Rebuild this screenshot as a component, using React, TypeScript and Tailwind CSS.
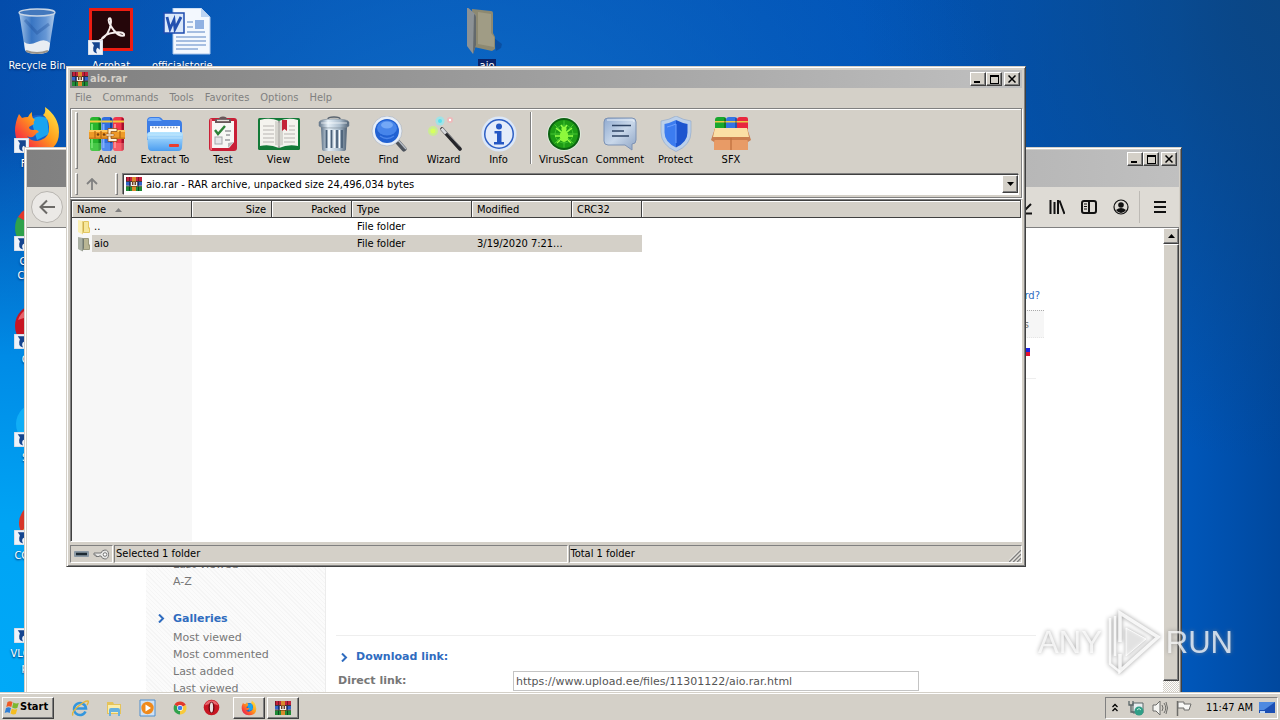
import React from "react";

const UI = "font-['DejaVu_Sans_Condensed','DejaVu_Sans',sans-serif]";

/* ---------- icons ---------- */

type IconProps = { className?: string };

function RarBooks({ className }: IconProps) {
  return (
    <svg className={className} viewBox="0 0 16 16" aria-hidden="true">
      <path d="M0 1h16v4H0z" fill="#c2213c" />
      <path d="M0 5.500h16v4H0z" fill="#3563c9" />
      <path d="M0 10.500h16v4.500H0z" fill="#1f8a35" />
      <path d="M0 5h16v.8H0zM0 9.800h16v.8H0z" fill="#23180f" />
      <path d="M0 1h1v4H0zM3 1h1v4H3zM12 1h1v4h-1z" fill="#7c1426" />
      <path d="M3 10.500h1V15H3zM12 10.500h1V15h-1z" fill="#0c4a1c" />
      <path d="M3 5.800h1v4H3zM12 5.800h1v4h-1z" fill="#16307a" />
      <path d="M6 1h4v14H6z" fill="#d98a2b" />
      <path d="M4.500 5.500h7v5h-7z" fill="#5b2d10" />
      <path d="M5.500 6v3.500h5V6M8 6v3" stroke="#f4efe6" strokeWidth="1.200" fill="none" />
    </svg>
  );
}

function AddIcon({ className }: IconProps) {
  const books = [
    { x: 1, c: "#28b52d", d: "#0d7d1b", l: "#6de06a" },
    { x: 12.5, c: "#2f6fe0", d: "#153fa0", l: "#7fb0ff" },
    { x: 24, c: "#f0354b", d: "#a80f2c", l: "#ff8b8e" },
  ];
  return (
    <svg className={className} viewBox="0 0 36 36" aria-hidden="true">
      {books.map((b) => (
        <g key={b.x}>
          <path d={`M${b.x} 4q0-3 3-3h5q3 0 3 3v28q0 3-3 3h-5q-3 0-3-3z`} fill={b.c} />
          <path d={`M${b.x + 8.500} 1.500q2.500 0 2.500 3v27q0 3-2.500 3z`} fill={b.d} />
          <path d={`M${b.x + 1} 8h2v24h-2z`} fill={b.l} />
          <path d={`M${b.x} 4.500h11v2h-11z`} fill="#f2ca3e" />
          <path d={`M${b.x} 27h11v5q0 3-3 3h-5q-3 0-3-3z`} fill={b.l} opacity=".45" />
        </g>
      ))}
      <path d="M0 14h36v9H0z" fill="#ee9a28" />
      <path d="M0 14h36v2H0z" fill="#ffc95e" />
      <path d="M0 21.500h36V23H0z" fill="#c97a1c" />
      <path d="M6 15v7M31 15v7M12 15v7" stroke="#b86a14" strokeWidth="1.300" />
      <circle cx="9" cy="18.500" r="1.300" fill="#7a400c" />
      <circle cx="15" cy="18.500" r="1.300" fill="#7a400c" />
      <path d="M19 12.500h9v3h-6v7h6v3h-9z" fill="#fff2d8" stroke="#8f4b10" strokeWidth=".8" />
      <path d="M17 18h8v2h-8z" fill="#fff2d8" stroke="#8f4b10" strokeWidth=".5" />
    </svg>
  );
}

function ExtractIcon({ className }: IconProps) {
  return (
    <svg className={className} viewBox="0 0 36 36" aria-hidden="true">
      <defs>
        <linearGradient id="fold" x1="0" y1="0" x2="0" y2="1">
          <stop offset="0" stopColor="#b9e6ff" />
          <stop offset="1" stopColor="#4b9df0" />
        </linearGradient>
      </defs>
      <path d="M0 5q0-4 4-4h8q2 0 4 3h15q4 0 4 4v16H0z" fill="#3c7de6" />
      <path d="M1 5q0-3 3-3h8l3 3H1z" fill="#79b2fb" />
      <path d="M3 10h30v12H3z" fill="#fff" />
      <path d="M5 11.500h26" stroke="#8c9bb3" strokeWidth="1.500" strokeDasharray="1.500 1.500" />
      <path d="M0 19q0-3 3-3h30q3 0 3 3l-1 12q0 4-4 4H5q-4 0-4-4z" fill="url(#fold)" />
      <path d="M1 19h34M1 22h34" stroke="#d8f2ff" strokeWidth=".8" opacity=".7" />
      <rect x="22" y="28" width="10" height="3" rx="1" fill="#ea3d2e" />
    </svg>
  );
}

function TestIcon({ className }: IconProps) {
  return (
    <svg className={className} viewBox="0 0 36 36" aria-hidden="true">
      <rect x="4" y="2" width="28" height="33" rx="3" fill="#c91f36" />
      <path d="M5 3h2v31H6q-1 0-1-2z" fill="#f16c7a" />
      <path d="M7 5h22v21l-5 6H7z" fill="#f7f7f5" />
      <path d="M29 26l-6 6v-5z" fill="#b9babd" />
      <path d="M10 7V3h4q0-2.500 4-2.500T22 3h4v4z" fill="#68575a" />
      <path d="M12 4.500h12" stroke="#e8e2df" strokeWidth="1.300" />
      <path d="M10 14l3 4 7-8" fill="none" stroke="#2d8238" strokeWidth="2.400" />
      <path d="M20 15h6M20 24h5M21 19h4" stroke="#9a9ca0" strokeWidth="1.300" />
      <rect x="10" y="21" width="7" height="7" fill="#e6e7e9" stroke="#a5a7ab" />
    </svg>
  );
}

function ViewIcon({ className }: IconProps) {
  return (
    <svg className={className} viewBox="0 0 42 36" aria-hidden="true">
      <rect x="0" y="2" width="42" height="32" rx="1.500" fill="#137a38" />
      <path d="M2 4q10-3 19 1 9-4 19-1v26q-10-2-19 2-9-4-19-2z" fill="#f4f3ee" />
      <path d="M21 5v27" stroke="#888" strokeWidth="1.500" />
      <path d="M17 5q3 0 4 2v24q-1-2-4-2zM25 5q-3 0-4 2v24q1-2 4-2z" fill="#c9c8c2" opacity=".7" />
      <path d="M5 10h11M5 14h11M5 18h11M5 22h11M5 26h11M26 18h11M26 22h11M26 26h11M31 14h6M31 10h6" stroke="#b7b6b1" strokeWidth="1.200" />
      <path d="M24 4h5v11l-2.500-2L24 15z" fill="#c32237" />
    </svg>
  );
}

function DeleteIcon({ className }: IconProps) {
  return (
    <svg className={className} viewBox="0 0 36 36" aria-hidden="true">
      <defs>
        <linearGradient id="can" x1="0" x2="1" y1="0" y2="0">
          <stop offset="0" stopColor="#5e7287" />
          <stop offset=".3" stopColor="#e6f0f8" />
          <stop offset=".7" stopColor="#aabccc" />
          <stop offset="1" stopColor="#4f6073" />
        </linearGradient>
      </defs>
      <path d="M12 3q0-2 6-2t6 2" fill="none" stroke="#59636e" strokeWidth="1.500" />
      <path d="M5 11h26l-1 22q0 2-3 2H9q-3 0-3-2z" fill="url(#can)" />
      <path d="M10.500 14v18M15.500 14v18M21 14v18M26 14v18" stroke="#4b6179" strokeWidth="1.800" />
      <path d="M13 14v18M18.300 14v18M23.500 14v18" stroke="#fff" strokeWidth="1" />
      <path d="M3 6q1-3 15-3t15 3v4q-1 2-15 2T3 10z" fill="url(#can)" stroke="#7a8894" strokeWidth=".6" />
      <path d="M5 7h26" stroke="#fff" strokeWidth="1" opacity=".7" />
    </svg>
  );
}

function FindIcon({ className }: IconProps) {
  return (
    <svg className={className} viewBox="0 0 36 36" aria-hidden="true">
      <path d="M25 24l8 9" stroke="#4d535c" strokeWidth="5" strokeLinecap="round" />
      <path d="M27 24l8 9" stroke="#b8bec6" strokeWidth="1.500" />
      <circle cx="16" cy="15" r="15" fill="#e7eef8" stroke="#a4adba" strokeWidth=".6" />
      <circle cx="16" cy="15" r="12" fill="#2161d2" />
      <ellipse cx="16" cy="12" rx="10" ry="7.500" fill="#4e8cee" opacity=".85" />
      <ellipse cx="16" cy="9" rx="6" ry="3.500" fill="#86b6fb" opacity=".7" />
      <path d="M9 20q7 5 14 0" stroke="#4c86ea" strokeWidth="1.500" fill="none" />
    </svg>
  );
}

function WizardIcon({ className }: IconProps) {
  return (
    <svg className={className} viewBox="0 0 36 36" aria-hidden="true">
      <path d="M16 13l18 20" stroke="#26262a" strokeWidth="3.600" strokeLinecap="round" />
      <path d="M15.500 12.500l4.500 5" stroke="#d9dadd" strokeWidth="3" />
      <path d="M18 13l16 17.500" stroke="#8d8f94" strokeWidth="1" />
      <circle cx="7" cy="15" r="5" fill="#c8f77c" opacity=".7" />
      <circle cx="7" cy="15" r="2.500" fill="#d7ff60" />
      <circle cx="14" cy="5" r="4.500" fill="#8de9f2" opacity=".7" />
      <circle cx="14" cy="5" r="2" fill="#59e0ee" />
      <circle cx="24" cy="4" r="3" fill="#f5b3b6" opacity=".8" />
      <circle cx="24" cy="4" r="1.200" fill="#fff" />
    </svg>
  );
}

function InfoIcon({ className }: IconProps) {
  return (
    <svg className={className} viewBox="0 0 36 36" aria-hidden="true">
      <circle cx="18" cy="18" r="17.500" fill="#dbe7f8" />
      <circle cx="18" cy="18" r="15" fill="#2c5ec3" />
      <circle cx="18" cy="18" r="13.500" fill="#e4ecfa" />
      <circle cx="18" cy="10.500" r="3" fill="#2457c4" />
      <path d="M13.500 15h7v11h2.500v2.500h-10V26h3v-8.500h-2.500z" fill="#2457c4" />
    </svg>
  );
}

function VirusIcon({ className }: IconProps) {
  return (
    <svg className={className} viewBox="0 0 36 36" aria-hidden="true">
      <circle cx="18" cy="18" r="17" fill="#dfe9dc" />
      <circle cx="18" cy="18" r="16" fill="#0c6312" />
      <circle cx="18" cy="18" r="14" fill="#1d9c15" />
      <path d="M18 4.500v27M4.500 18h27M8.500 8.500l19 19M27.500 8.500l-19 19" stroke="#51cf3a" strokeWidth=".8" />
      <circle cx="18" cy="18" r="9" fill="none" stroke="#47c932" strokeWidth=".8" />
      <path d="M10 12l5 4M26 12l-5 4M9 20h18M11 27l5-5M25 27l-5-5M15 9l2 3M21 9l-2 3" stroke="#95ff47" strokeWidth="1.400" />
      <ellipse cx="18" cy="20" rx="4.200" ry="6" fill="#8df83c" />
      <circle cx="18" cy="13" r="2.600" fill="#8df83c" />
    </svg>
  );
}

function CommentIcon({ className }: IconProps) {
  return (
    <svg className={className} viewBox="0 0 36 36" aria-hidden="true">
      <defs>
        <linearGradient id="cmt" x1="0" y1="0" x2="1" y2="1">
          <stop offset="0" stopColor="#8fa9cf" />
          <stop offset=".5" stopColor="#c9d8ea" />
          <stop offset="1" stopColor="#8da3c4" />
        </linearGradient>
      </defs>
      <path d="M6 2h24q4 0 4 4v18q0 4-4 4v6l-7-5H6q-4 0-4-4V6q0-4 4-4z" fill="url(#cmt)" stroke="#7d92b4" />
      <path d="M5 4h26q1 0 1 2" fill="none" stroke="#e9f1fa" />
      <path d="M10 9.500h19M10 15h12M10 20h17" stroke="#2f4464" strokeWidth="1.700" />
    </svg>
  );
}

function ProtectIcon({ className }: IconProps) {
  return (
    <svg className={className} viewBox="0 0 36 36" aria-hidden="true">
      <path d="M18 0q7 4 15 5v11q0 13-15 19.500Q3 29 3 16V5q8-1 15-5z" fill="#bcd0ea" stroke="#8ca5c8" strokeWidth=".6" />
      <path d="M18 4q6 3 11.500 4v8.500q0 9.500-11.500 15z" fill="#1d55cf" />
      <path d="M18 4Q12 7 6.500 8v8.500q0 9.500 11.500 15z" fill="#3c7cf0" />
      <path d="M18 8v19M9 11q4-1 9-3" stroke="#6ea0ff" strokeWidth="1" fill="none" />
    </svg>
  );
}

function SfxIcon({ className }: IconProps) {
  return (
    <svg className={className} viewBox="0 0 40 36" aria-hidden="true">
      <path d="M4 4q0-3 3-3h6q2 0 2 2v10H4z" fill="#18a72d" />
      <path d="M15 4q0-3 3-3h6q2 0 2 2v10H15z" fill="#3474e4" />
      <path d="M26 4q0-3 3-3h6q2 0 2 2v10H26z" fill="#e8273f" />
      <path d="M4 5h33v1.500H4z" fill="#eac847" />
      <path d="M13 2h2v10h-2zM24 2h2v10h-2z" fill="#000" opacity=".25" />
      <path d="M3 13h34v21H3z" fill="#e89b66" />
      <path d="M3 21h34v3H3z" fill="#b86b3c" opacity=".6" />
      <path d="M4 12L0 24l3 2 3-9zM36 12l4 12-3 2-3-9z" fill="#c98053" />
      <path d="M4 12h32l2 9H2z" fill="#fbe0a5" />
      <path d="M20 22v12" stroke="#c0703f" strokeWidth="1.300" />
    </svg>
  );
}

function FolderSmall({ className, dim }: IconProps & { dim?: boolean }) {
  return (
    <svg className={className} viewBox="0 0 16 16" aria-hidden="true">
      <path d="M5 2h7q1 0 1 1v5l1 1v4q0 1-1 1H5z" fill={dim ? "#9b9a7c" : "#e3c75f"} />
      <path d="M8 3h4v6l1 1v3H8z" fill={dim ? "#b9b694" : "#f6e79b"} />
      <path d="M2 1l5 1q1 0 1 1v9l-1.500 3.500L2 13z" fill={dim ? "#aab0a4" : "#fbf0b4"} />
      <path d="M6.500 2L8 3v9l-1.500 3.500z" fill={dim ? "#737a70" : "#d0b04a"} />
    </svg>
  );
}

function FolderIcon({ className }: IconProps) {
  return (
    <svg className={className} viewBox="0 0 48 48" aria-hidden="true">
      <path d="M31 30l8 6-1 4-5 3z" fill="#0a3c84" opacity=".5" />
      <path d="M9 1l19 2q2 0 2 2v20l2 4v12l-3 2-18-4z" fill="#8d8971" />
      <path d="M15 4l13 2v19l3 4v10l-16-3z" fill="#a09c85" />
      <path d="M4 0q1-.5 2 .5L12 6q1 1 1 3v28l-3 9-6-8z" fill="#8c9296" />
      <path d="M11 6q2 1 2 3v28l-3 9z" fill="#63696c" />
    </svg>
  );
}

function FirefoxIcon({ className }: IconProps) {
  return (
    <svg className={className} viewBox="0 0 48 48" aria-hidden="true">
      <defs>
        <linearGradient id="ffx" x1="1" y1="0" x2="0" y2="1">
          <stop offset="0" stopColor="#fff04a" />
          <stop offset=".45" stopColor="#ff9c1c" />
          <stop offset=".75" stopColor="#f9413a" />
          <stop offset="1" stopColor="#d2156c" />
        </linearGradient>
      </defs>
      <circle cx="25" cy="25" r="16" fill="#175ec9" />
      <path d="M18 14q6-6 16-2l2 16-12 6z" fill="#1aa4f0" />
      <path d="M32 1q14 10 14 25 0 20-22 20Q3 45 2 25q0-9 4-17l3 4q2-1 6-1 1-3 4-5-1 5 3 8-2 1-1 4l-5 3q0 3 4 3 4-1 6 2-3 1-4 3-3 4-8 1 5 7 14 4 9-3 8-13 0-8-6-12 3-2 2-8z" fill="url(#ffx)" />
    </svg>
  );
}

function ChromeIcon({ className }: IconProps) {
  return (
    <svg className={className} viewBox="0 0 48 48" aria-hidden="true">
      <path d="M24 24L5 13A22 22 0 0 1 44 14z" fill="#e2392c" />
      <path d="M24 24l20-10a22 22 0 0 1-20 32z" fill="#f8ca3a" />
      <path d="M24 24v22A22 22 0 0 1 5 13z" fill="#2fa24b" />
      <circle cx="24" cy="24" r="10" fill="#fff" />
      <circle cx="24" cy="24" r="8" fill="#3f80ee" />
    </svg>
  );
}

function OperaIcon({ className }: IconProps) {
  return (
    <svg className={className} viewBox="0 0 48 48" aria-hidden="true">
      <circle cx="24" cy="24" r="22" fill="#c71522" />
      <path d="M5 18a20 20 0 0 1 38 0q-18-8-38 0z" fill="#e8646c" />
      <ellipse cx="24" cy="24" rx="8.500" ry="16" fill="#6c0a12" />
      <ellipse cx="24" cy="24" rx="4.500" ry="14" fill="#e8e0e0" />
    </svg>
  );
}

function SkypeIcon({ className }: IconProps) {
  return (
    <svg className={className} viewBox="0 0 48 48" aria-hidden="true">
      <circle cx="24" cy="24" r="21" fill="#10aef6" />
      <path d="M31 17q-3-4-8-3-6 1-5 5t8 5 5 6q-1 4-7 4-5 0-8-4" fill="none" stroke="#fff" strokeWidth="4" />
    </svg>
  );
}

function CleanerIcon({ className }: IconProps) {
  return (
    <svg className={className} viewBox="0 0 48 48" aria-hidden="true">
      <path d="M34 10a17 17 0 1 0 5 26" fill="none" stroke="#d63528" strokeWidth="6" />
      <path d="M8 34l14-16 8 8-10 16z" fill="#e7a23c" />
    </svg>
  );
}

function VlcIcon({ className }: IconProps) {
  return (
    <svg className={className} viewBox="0 0 48 48" aria-hidden="true">
      <path d="M20 4h8l10 34H14z" fill="#f58413" />
      <path d="M18 15h13l2 8H16z" fill="#fff" />
      <path d="M14 36h26v6H14z" fill="#e06d06" />
    </svg>
  );
}

function BinIcon({ className }: IconProps) {
  return (
    <svg className={className} viewBox="0 0 48 48" aria-hidden="true">
      <defs>
        <linearGradient id="bin" x1="0" x2="1" y1="0" y2="0">
          <stop offset="0" stopColor="#c6ddf5" stopOpacity=".85" />
          <stop offset=".35" stopColor="#4f86cc" stopOpacity=".7" />
          <stop offset=".75" stopColor="#7fa9df" stopOpacity=".8" />
          <stop offset="1" stopColor="#dcebfa" stopOpacity=".8" />
        </linearGradient>
      </defs>
      <path d="M6 4h36l-6 38q-2 4-12 4t-12-4z" fill="url(#bin)" />
      <path d="M12 12l12 13 12-9" stroke="#1c4d98" strokeWidth="3" fill="none" opacity=".35" />
      <path d="M11 34q5 4 13 0t13 1l-1 7q-2 4-12 4t-12-4z" fill="#e9edf2" />
      <path d="M13 43q11 4 22 0" stroke="#97928a" strokeWidth="2" fill="none" />
      <ellipse cx="24" cy="4.500" rx="18" ry="3.500" fill="#4378bd" stroke="#c9d6e6" strokeWidth="1.300" />
    </svg>
  );
}

function AcrobatIcon({ className }: IconProps) {
  return (
    <svg className={className} viewBox="0 0 48 48" aria-hidden="true">
      <path d="M2 0h44v43H2z" fill="#ed1c12" />
      <path d="M5 3h38v37H5z" fill="#25060a" />
      <path d="M12 33q11-6 12-19 0-5-2-3.500-2 3 5 12 5 6 10 5 1-4-9-3-11 1-14 8-2 3-3 1z" fill="none" stroke="#f6eeee" strokeWidth="2" />
    </svg>
  );
}

function WordIcon({ className }: IconProps) {
  return (
    <svg className={className} viewBox="0 0 48 48" aria-hidden="true">
      <path d="M10 0h28l9 9v37H10z" fill="#f3f8fe" stroke="#a9c5ea" />
      <path d="M38 0l9 9h-9z" fill="#bcd4f2" />
      <path d="M13 29h30M13 33h30M13 37h30M13 41h22M24 14h6M24 19h6M24 24h18" stroke="#5a84c4" strokeWidth="1.200" />
      <path d="M32 12h9v9h-9z" fill="#90b1e2" />
      <path d="M1 5h20v20H1z" fill="#dbe8fa" stroke="#1e4bae" strokeWidth="1.500" />
      <path d="M4 9l3 12 4-9 1 9 6-12" fill="none" stroke="#2350b0" strokeWidth="2.800" />
    </svg>
  );
}

function ShortcutArrow({ className }: IconProps) {
  return (
    <svg className={className} viewBox="0 0 14 14" aria-hidden="true">
      <path d="M0 0h14v14H0z" fill="#eef3fa" stroke="#c3ccd8" />
      <path d="M3.500 2h7.500v7L9 7.200Q6.500 9 8.500 12.500 3 11.500 5.500 5z" fill="#15458f" />
    </svg>
  );
}

/* ---------- desktop ---------- */

type DesktopItem = { label: string; Icon: React.ComponentType<IconProps>; shortcut?: boolean };

function Shortcut({ item, selected }: { item: DesktopItem; selected?: boolean }) {
  return (
    <button type="button" className="relative flex h-[98px] w-[74px] shrink-0 flex-col items-center">
      <item.Icon className="size-12" />
      {item.shortcut && <ShortcutArrow className="absolute top-8 left-[14px] size-[15px]" />}
      <span className={`mt-[3px] px-[2px] text-[11px] leading-[14px] text-white [text-shadow:0_1px_2px_#00205a] ${selected ? "bg-[#0a246a]" : ""}`}>
        {item.label}
      </span>
    </button>
  );
}

const firstColumn: DesktopItem[] = [
  { label: "Recycle Bin", Icon: BinIcon },
  { label: "Firefox", Icon: FirefoxIcon, shortcut: true },
  { label: "Google Chrome", Icon: ChromeIcon, shortcut: true },
  { label: "Opera", Icon: OperaIcon, shortcut: true },
  { label: "Skype", Icon: SkypeIcon, shortcut: true },
  { label: "CCleaner", Icon: CleanerIcon, shortcut: true },
  { label: "VLC media player", Icon: VlcIcon, shortcut: true },
];

/* ---------- window parts ---------- */

const raised = "border border-t-white border-l-white border-r-[#404040] border-b-[#404040] bg-[#d4d0c8] shadow-[inset_-1px_-1px_0_#808080]";
const frame =
  "border border-t-[#d4d0c8] border-l-[#d4d0c8] border-r-[#404040] border-b-[#404040] bg-[#d4d0c8] shadow-[inset_1px_1px_0_#fff,inset_-1px_-1px_0_#808080]";
const sunken = "border border-t-[#808080] border-l-[#808080] border-r-white border-b-white";

function WindowButtons() {
  return (
    <div className="flex shrink-0">
      <button type="button" aria-label="Minimize" className={`flex h-[14px] w-4 items-end justify-center pb-[2px] ${raised}`}>
        <span className="mr-[2px] h-[2px] w-[6px] bg-black" />
      </button>
      <button type="button" aria-label="Maximize" className={`flex h-[14px] w-4 items-center justify-center ${raised}`}>
        <span className="h-[9px] w-[9px] border border-t-2 border-black" />
      </button>
      <button type="button" aria-label="Close" className={`ml-[2px] flex h-[14px] w-4 items-center justify-center ${raised}`}>
        <svg className="size-2" viewBox="0 0 8 8" aria-hidden="true">
          <path d="M.5.5l7 7M7.500.5l-7 7" stroke="#000" strokeWidth="1.500" />
        </svg>
      </button>
    </div>
  );
}

function Chevron() {
  return (
    <svg className="size-[9px]" viewBox="0 0 9 9" fill="none" stroke="#2f6cbf" strokeWidth="2" aria-hidden="true">
      <path d="M2 .5l4 4-4 4" />
    </svg>
  );
}

function BrowserWindow() {
  return (
    <section aria-label="Browser" className={`absolute top-[147px] right-[98px] -bottom-[2px] left-6 flex flex-col overflow-hidden px-[2px] pt-[2px] ${frame}`}>
      <header className="flex h-[37px] shrink-0 justify-end bg-linear-to-r from-[#808080] to-[#c0c0c0] pt-[2px] pr-[2px]">
        <WindowButtons />
      </header>
      <div className="flex h-[41px] shrink-0 items-center justify-between border-b border-[#808080] bg-[#dedbd5] pr-[5px] pl-1">
        <button type="button" aria-label="Back" className="flex size-8 items-center justify-center rounded-full border border-[#b8b5b0] bg-[#ebe9e6]">
          <svg className="size-4" viewBox="0 0 16 16" fill="none" stroke="#6c6a67" strokeWidth="2" aria-hidden="true">
            <path d="M16 8H1.500M8 1.500L1.500 8 8 14.500" />
          </svg>
        </button>
        <div className="flex items-center gap-4">
          <button type="button" aria-label="Downloads">
            <svg className="size-4" viewBox="0 0 16 16" fill="none" stroke="#111" strokeWidth="2" aria-hidden="true">
              <path d="M8 1v9M3 6l5 5 6-6M1 14.500h14" />
            </svg>
          </button>
          <button type="button" aria-label="Library">
            <svg className="size-4" viewBox="0 0 16 16" fill="none" stroke="#111" strokeWidth="2" aria-hidden="true">
              <path d="M1.500 1v14M5.500 3v12M9 1v14M10.500 1.500L15.500 15" />
            </svg>
          </button>
          <button type="button" aria-label="Sidebars">
            <svg className="size-4" viewBox="0 0 16 16" fill="none" stroke="#111" strokeWidth="2" aria-hidden="true">
              <rect x="1" y="2" width="14" height="12" rx="2" />
              <path d="M8 2v12" />
              <path d="M3 5h3M3 7.500h3M3 10h3" strokeWidth="1" />
            </svg>
          </button>
          <button type="button" aria-label="Account">
            <svg className="size-4" viewBox="0 0 16 16" aria-hidden="true">
              <circle cx="8" cy="8" r="7" fill="none" stroke="#111" strokeWidth="1.200" />
              <circle cx="8" cy="6" r="2.800" fill="#111" />
              <path d="M3 11q5-4 10 0-2 3-5 3t-5-3z" fill="#111" />
            </svg>
          </button>
          <span className="-ml-[6px] h-8 border-l border-[#bdbab5]" />
          <button type="button" aria-label="Menu" className="-ml-[10px] px-2">
            <svg className="size-3" viewBox="0 0 12 12" stroke="#111" strokeWidth="2" aria-hidden="true">
              <path d="M0 1h12M0 6h12M0 11h12" />
            </svg>
          </button>
        </div>
      </div>
      <div className="flex min-h-0 flex-1 bg-white font-['DejaVu_Sans',sans-serif] text-[11px] text-[#777]">
        <div className="flex min-w-0 flex-1 overflow-hidden">
          <nav aria-label="Site" className="ml-[119px] w-[180px] shrink-0 border-r border-[#ececec] bg-[repeating-linear-gradient(45deg,#f5f5f5_0_1px,#fbfbfb_1px_3px)] pt-[328px] pl-[27px] leading-[17px]">
            <ul>
              <li><a href="#last">Last viewed</a></li>
              <li><a href="#az">A-Z</a></li>
            </ul>
            <h2 className="-ml-4 mt-5 mb-[2px] flex items-center gap-[7px] text-[#2f6cbf] font-bold">
              <Chevron />
              Galleries
            </h2>
            <ul>
              <li><a href="#most-viewed">Most viewed</a></li>
              <li><a href="#most-commented">Most commented</a></li>
              <li><a href="#last-added">Last added</a></li>
              <li><a href="#last-viewed">Last viewed</a></li>
            </ul>
          </nav>
          <main className="ml-[10px] flex w-[708px] shrink-0 flex-col">
            <p className="mt-[60px] pr-1 text-right text-[10px] leading-4">
              <a href="#password" className="text-[#2f6cbf]">rd?</a>
            </p>
            <div className="mt-[6px] h-7 border-t border-b border-dotted border-[#aaa] border-b-[#e5e5e5] bg-[#f6f6f6] pr-[15px] text-right text-[10px] leading-7">s</div>
            <div className="mr-2 flex h-[41px] justify-end border-b border-[#eee] pt-[10px] pr-[6px]">
              <span className="h-2 w-3 border-b-4 border-[#e01030] bg-[#1a22e8]" />
            </div>
            <div className="mt-[256px] mr-2 border-t border-[#eee]" />
            <h2 className="mt-[13px] flex items-center gap-[7px] pl-1 leading-4 font-bold text-[#2f6cbf]">
              <Chevron />
              Download link:
            </h2>
            <div className="mt-[6px] flex items-center pl-[2px]">
              <label htmlFor="direct" className="w-[175px] font-bold">Direct link:</label>
              <input id="direct" readOnly defaultValue="https://www.upload.ee/files/11301122/aio.rar.html" className="h-5 w-[406px] border border-[#c4c4c4] bg-white px-[2px] text-[#555] outline-none" />
            </div>
          </main>
        </div>
        <div className="flex w-4 shrink-0 flex-col bg-[repeating-conic-gradient(#d4d0c8_0_25%,#fff_0_50%)] bg-size-[2px_2px]">
          <button type="button" aria-label="Scroll up" className={`flex h-4 items-center justify-center ${raised}`}>
            <svg className="h-1 w-[7px]" viewBox="0 0 7 4" aria-hidden="true"><path d="M0 4l3.500-4L7 4z" /></svg>
          </button>
          <div className={`mb-3 flex-1 ${raised}`} />
        </div>
      </div>
    </section>
  );
}

const archiveTools = [
  { label: "Add", Icon: AddIcon, width: "w-[56px]", icon: "w-9" },
  { label: "Extract To", Icon: ExtractIcon, width: "w-[60px]", icon: "w-9" },
  { label: "Test", Icon: TestIcon, width: "w-[56px]", icon: "w-9" },
  { label: "View", Icon: ViewIcon, width: "w-[55px]", icon: "w-[42px]" },
  { label: "Delete", Icon: DeleteIcon, width: "w-[55px]", icon: "w-9" },
  { label: "Find", Icon: FindIcon, width: "w-[55px]", icon: "w-9" },
  { label: "Wizard", Icon: WizardIcon, width: "w-[55px]", icon: "w-9" },
  { label: "Info", Icon: InfoIcon, width: "w-[55px]", icon: "w-9" },
];

const extraTools = [
  { label: "VirusScan", Icon: VirusIcon, width: "w-[55px]", icon: "w-9" },
  { label: "Comment", Icon: CommentIcon, width: "w-[58px]", icon: "w-9" },
  { label: "Protect", Icon: ProtectIcon, width: "w-[53px]", icon: "w-9" },
  { label: "SFX", Icon: SfxIcon, width: "w-[58px]", icon: "w-10" },
];

function Tool({ tool }: { tool: (typeof archiveTools)[number] }) {
  return (
    <button type="button" className={`flex flex-col items-center gap-px text-[11px] leading-[14px] whitespace-nowrap ${tool.width}`}>
      <tool.Icon className={`h-9 ${tool.icon}`} />
      {tool.label}
    </button>
  );
}

function Grip({ className }: IconProps) {
  return <span className={`w-[3px] shrink-0 border border-t-white border-l-white border-r-[#808080] border-b-[#808080] ${className}`} />;
}

const headCell = "h-[17px] border-r border-b border-r-[#404040] border-b-[#404040] bg-[#d4d0c8] px-[5px] pt-[2px] pb-0 font-normal leading-[14px] shadow-[inset_1px_1px_0_#fff]";

const rows = [
  { name: "..", type: "File folder", modified: "", selected: false },
  { name: "aio", type: "File folder", modified: "3/19/2020 7:21...", selected: true },
];

function ArchiveWindow() {
  return (
    <section aria-label="aio.rar" className={`absolute top-[66px] right-[254px] bottom-[125px] left-[66px] flex flex-col p-[3px] text-[11px] text-black ${frame}`}>
      <header className="flex h-[18px] shrink-0 items-center justify-between bg-linear-to-r from-[#808080] to-[#c0c0c0] pr-[2px] pl-[2px]">
        <h1 className="flex items-center gap-[2px] font-bold text-[#d4d0c8]">
          <RarBooks className="size-4" />
          aio.rar
        </h1>
        <WindowButtons />
      </header>
      <nav aria-label="Menu" className="flex h-5 shrink-0 items-center gap-[11px] pt-px pl-[5px] text-[#808080]">
        {["File", "Commands", "Tools", "Favorites", "Options", "Help"].map((m) => (
          <button key={m} type="button">{m}</button>
        ))}
      </nav>
      <div className="shrink-0 border border-[#808080] p-px shadow-[inset_1px_1px_0_#fff,1px_1px_0_#fff]">
        <div className="flex h-[62px] items-start pt-[6px] pl-[3px]">
          <Grip className="-mt-1 h-[57px]" />
          <div className="ml-px flex">
            {archiveTools.map((t) => <Tool key={t.label} tool={t} />)}
          </div>
          <span className="mr-1 ml-1 -mt-1 h-[52px] border-r border-l border-r-white border-l-[#808080]" />
          <div className="flex">
            {extraTools.map((t) => <Tool key={t.label} tool={t} />)}
          </div>
        </div>
        <div className="flex h-6 items-center pr-px pl-[3px]">
          <Grip className="h-[22px]" />
          <button type="button" aria-label="Up one level" className="flex w-[28px] justify-center">
            <svg className="size-3" viewBox="0 0 12 12" fill="none" stroke="#808080" strokeWidth="1.800" aria-hidden="true">
              <path d="M6 12V1M1 6l5-5 5 5" />
            </svg>
          </button>
          <Grip className="mr-[5px] ml-[9px] h-[22px]" />
          <div className="flex h-[21px] flex-1 items-center border border-t-[#404040] border-l-[#404040] border-r-white border-b-white bg-white pl-[2px] shadow-[-1px_-1px_0_#808080]">
            <RarBooks className="mr-1 size-4" />
            <input aria-label="Archive path" readOnly defaultValue="aio.rar - RAR archive, unpacked size 24,496,034 bytes" className="h-[18px] min-w-0 flex-1 bg-white pt-px outline-none" />
            <button type="button" aria-label="Show paths" className={`flex h-[18px] w-4 items-center justify-center ${raised}`}>
              <svg className="h-1 w-[7px]" viewBox="0 0 7 4" aria-hidden="true"><path d="M0 0h7L3.500 4z" /></svg>
            </button>
          </div>
        </div>
      </div>
      <div className="mt-px flex min-h-0 flex-1 flex-col border border-t-[#808080] border-l-[#808080] border-r-white border-b-white">
        <div className="min-h-0 flex-1 overflow-hidden border-t border-l border-[#404040] bg-[linear-gradient(to_right,#f7f7f7_120px,#fff_120px)]">
          <table className="w-full table-fixed border-separate border-spacing-0 text-left">
            <thead>
              <tr>
                <th className={`w-[120px] ${headCell}`}>
                  <span className="flex items-center gap-[9px]">
                    Name
                    <svg className="h-1 w-[7px]" viewBox="0 0 7 4" aria-hidden="true"><path d="M0 4l3.500-4L7 4z" fill="#808080" /></svg>
                  </span>
                </th>
                <th className={`w-20 text-right ${headCell}`}>Size</th>
                <th className={`w-20 text-right ${headCell}`}>Packed</th>
                <th className={`w-[120px] ${headCell}`}>Type</th>
                <th className={`w-[100px] ${headCell}`}>Modified</th>
                <th className={`w-[70px] ${headCell}`}>CRC32</th>
                <th className={headCell} />
              </tr>
            </thead>
            <tbody>
              {rows.map((r) => {
                const cell = r.selected ? "bg-[#d4d0c8] px-[5px] pt-px" : "px-[5px] pt-px";
                return (
                  <tr key={r.name} className="h-[17px] leading-4">
                    <td className="pl-1">
                      <span className="flex items-center">
                        <FolderSmall dim={r.selected} className="size-4" />
                        <span className={`h-[17px] flex-1 pt-px pl-[2px] ${r.selected ? "bg-[#d4d0c8]" : ""}`}>{r.name}</span>
                      </span>
                    </td>
                    <td className={cell} />
                    <td className={cell} />
                    <td className={cell}>{r.type}</td>
                    <td className={`whitespace-nowrap ${cell}`}>{r.modified}</td>
                    <td className={cell} />
                    <td />
                  </tr>
                );
              })}
            </tbody>
          </table>
        </div>
      </div>
      <footer className="mt-[3px] flex h-[18px] shrink-0 items-center gap-px leading-4">
        <div className={`flex h-full w-[43px] items-center justify-center gap-1 ${sunken}`}>
          <svg className="h-[6px] w-[15px]" viewBox="0 0 15 6" aria-hidden="true">
            <rect width="15" height="6" rx="1" fill="#8b99a5" />
            <path d="M2 3h11" stroke="#1d2a33" strokeWidth="2.500" />
          </svg>
          <svg className="h-[11px] w-4" viewBox="0 0 16 11" aria-hidden="true">
            <path d="M8 4H1v2h2v1.500h3V7h2q1 3 4 3 3.500 0 3.500-4.500T12 1Q9 1 8 4z" fill="#e6e6e4" stroke="#777" />
            <circle cx="12" cy="5.500" r="1.800" fill="#fff" stroke="#777" />
          </svg>
        </div>
        <div className={`h-full flex-1 pl-px ${sunken}`}>Selected 1 folder</div>
        <div className={`flex h-full flex-1 items-end justify-between pl-px ${sunken}`}>
          Total 1 folder
          <svg className="size-3" viewBox="0 0 12 12" stroke="#808080" strokeWidth="1.500" aria-hidden="true">
            <path d="M0 12L12 0M4 12l8-8M8 12l4-4" />
            <path d="M-1.500 12L12-1.500M2.500 12L12 2.500M6.500 12L12 6.500" stroke="#fff" strokeWidth=".7" />
          </svg>
        </div>
      </footer>
    </section>
  );
}

function Watermark() {
  return (
    <div className="absolute right-[47px] bottom-[18px] flex items-center gap-1 font-['Liberation_Sans_Narrow','Liberation_Sans',sans-serif] text-[31px] leading-none text-white/75 drop-shadow-[0_0_2px_#888]">
      <span>ANY</span>
      <svg className="h-16 w-[56px]" viewBox="0 0 56 64" fill="none" stroke="#fff" strokeOpacity=".85" strokeWidth="3.500" aria-hidden="true">
        <path d="M14 32V3l38 24L14 61V44" />
        <path d="M4 8v46l10 8M9 6v40" strokeWidth="2.500" />
        <path d="M20 18v28l20-17z" fill="#fff" fillOpacity=".6" strokeWidth="1" />
      </svg>
      <span>RUN</span>
    </div>
  );
}

/* ---------- taskbar ---------- */

function WindowsFlag({ className }: IconProps) {
  return (
    <svg className={className} viewBox="0 0 16 16" aria-hidden="true">
      <path d="M3.500 2q2.500-1.500 5 0L7.300 7q-2.500-1.500-5 0z" fill="#ef5a24" />
      <path d="M9.300 2.500q2.500 1.500 5.500.5l-1.500 5q-2.500 1-5.200-.5z" fill="#7db72f" />
      <path d="M2 8q2.500-1.500 5 0l-1.300 5q-2.500-1.500-5 0z" fill="#2f7fd6" />
      <path d="M7.800 8.500q2.500 1.500 5.500.5l-1.500 5q-2.500 1-5.200-.5z" fill="#f5bd20" />
    </svg>
  );
}

function ExplorerE({ className }: IconProps) {
  return (
    <svg className={className} viewBox="0 0 18 18" fill="none" aria-hidden="true">
      <path d="M14.500 12.500A6 6 0 1 1 15 9.500H5" stroke="#3396de" strokeWidth="2.500" />
      <path d="M2 16.500q-2-3 5-9t10-5.500q1 1-1 4" stroke="#e3b73a" strokeWidth="1.400" />
    </svg>
  );
}

function FilesIcon({ className }: IconProps) {
  return (
    <svg className={className} viewBox="0 0 18 18" aria-hidden="true">
      <path d="M2 3h6l1 2h7v10H2z" fill="#e5c35a" />
      <path d="M3 6h12v8H3z" fill="#fbedaa" />
      <path d="M4 11q0-2 2-2h7q2 0 2 2v6h-2v-4H6v4H4z" fill="#66b1e0" />
    </svg>
  );
}

function PlayerIcon({ className }: IconProps) {
  return (
    <svg className={className} viewBox="0 0 18 18" aria-hidden="true">
      <path d="M1 1h15v16H1z" fill="#cfe1f4" stroke="#4f8fce" />
      <circle cx="8.500" cy="9" r="6.200" fill="#f08a1c" />
      <path d="M6.500 5.500v7L12 9z" fill="#fff" />
    </svg>
  );
}

function Taskbar() {
  return (
    <footer className="flex h-7 shrink-0 items-center justify-between border-t border-[#d4d0c8] bg-[#d4d0c8] px-[2px] pt-[2px] text-[11px] text-black shadow-[inset_0_1px_0_#fff]">
      <div className="flex items-center">
        <button type="button" className={`flex h-[22px] w-[52px] items-center pl-px text-[11px] font-bold ${raised}`}>
          <WindowsFlag className="size-4" />
          Start
        </button>
        <div className="mr-[9px] ml-[17px] flex gap-4">
          <button type="button" aria-label="Internet Explorer"><ExplorerE className="size-[18px]" /></button>
          <button type="button" aria-label="Files"><FilesIcon className="size-[18px]" /></button>
          <button type="button" aria-label="Media player"><PlayerIcon className="size-[18px]" /></button>
          <button type="button" aria-label="Chrome"><ChromeIcon className="size-[14px]" /></button>
          <button type="button" aria-label="Opera"><OperaIcon className="size-[17px]" /></button>
        </div>
        <button type="button" aria-label="Firefox" className={`ml-1 flex h-[22px] w-8 items-center justify-center ${raised}`}>
          <FirefoxIcon className="size-4" />
        </button>
        <button type="button" aria-label="WinRAR" className={`ml-[2px] flex h-[22px] w-8 items-center justify-center ${raised}`}>
          <RarBooks className="size-4" />
        </button>
      </div>
      <div className={`flex h-[22px] items-center pr-[2px] pl-[5px] ${sunken}`}>
        <button type="button" aria-label="Show hidden icons">
          <svg className="h-[9px] w-2" viewBox="0 0 8 9" fill="none" stroke="#000" strokeWidth="1.300" aria-hidden="true">
            <path d="M1.500 4L4 1.500 6.500 4M1.500 8L4 5.500 6.500 8" />
          </svg>
        </button>
        <svg className="ml-[9px] size-4" viewBox="0 0 16 16" aria-hidden="true">
          <path d="M5 3h10v10H5z" fill="#e8eef0" stroke="#5a6668" />
          <path d="M1 1v4h4V1M3 5v7h5" fill="none" stroke="#5a6668" strokeWidth="1.300" />
          <circle cx="11" cy="11" r="4.500" fill="#2f9e86" />
          <path d="M9 10q2-3 4 0" stroke="#c9f0e2" fill="none" />
        </svg>
        <svg className="ml-2 size-4" viewBox="0 0 16 16" fill="#f5f5f2" stroke="#6d6d6a" aria-hidden="true">
          <path d="M1 5h3l4-4v14l-4-4H1z" />
          <path d="M10 5q2 3 0 6M12 3q3.500 5 0 10M14 2q3 6 0 12" fill="none" />
        </svg>
        <svg className="ml-2 size-4" viewBox="0 0 16 16" fill="#f8f8f6" stroke="#6d6d6a" aria-hidden="true">
          <path d="M1.500 1v15" strokeWidth="1.500" />
          <path d="M2 2h6v2h7l-2 6H8V8H2z" />
        </svg>
        <time className="ml-[14px] pt-px whitespace-nowrap">11:47 AM</time>
        <svg className="ml-[6px] h-3 w-4" viewBox="0 0 16 12" aria-hidden="true">
          <path d="M0 0h16v11H0z" fill="#1b4fb4" />
          <path d="M0 0h16L5 8H0z" fill="#4e8ae0" />
          <path d="M1 9h5v2H1z" fill="#bcd5f4" />
        </svg>
      </div>
    </footer>
  );
}

export default function App() {
  return (
    <div className={`flex h-screen flex-col overflow-hidden ${UI}`}>
      <div className="relative min-h-0 flex-1 overflow-hidden bg-[radial-gradient(ellipse_420px_560px_at_0%_100%,#00a9f8_0%,#00a4f4_30%,#008be6_60%,transparent_100%),radial-gradient(ellipse_560px_420px_at_36%_24%,#0e6cc8_0%,transparent_100%),radial-gradient(ellipse_420px_460px_at_100%_0%,#0b4684_0%,transparent_100%),linear-gradient(to_right,#0349a8_0%,#0050b4_60%,#0058bc_92%,#00489e_100%)]">
        <div className="absolute top-2 left-0 flex flex-col">
          {firstColumn.map((i) => <Shortcut key={i.label} item={i} />)}
        </div>
        <div className="absolute top-2 left-[74px]">
          <Shortcut item={{ label: "Acrobat", Icon: AcrobatIcon, shortcut: true }} />
        </div>
        <div className="absolute top-2 left-[150px]">
          <Shortcut item={{ label: "officialstorie...", Icon: WordIcon }} />
        </div>
        <div className="absolute top-2 left-[450px]">
          <Shortcut selected item={{ label: "aio", Icon: FolderIcon }} />
        </div>
        <BrowserWindow />
        <ArchiveWindow />
        <Watermark />
      </div>
      <Taskbar />
    </div>
  );
}
